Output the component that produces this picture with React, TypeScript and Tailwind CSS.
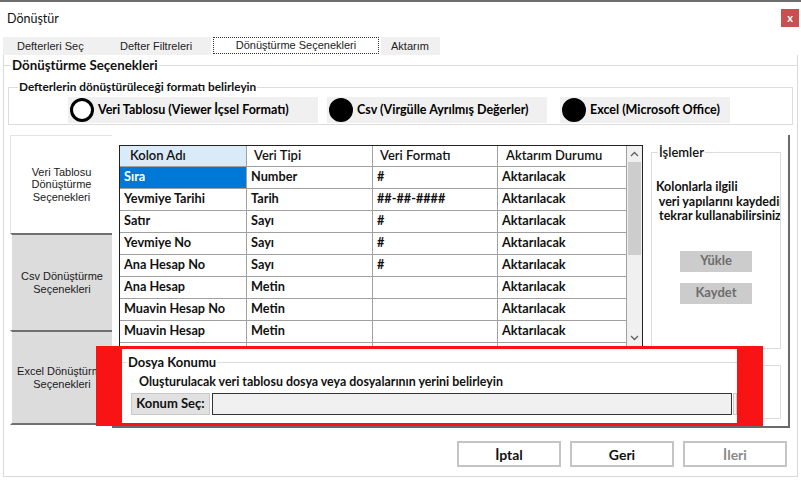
import React from "react";

const rows = [
  ["Sıra", "Number", "#", "Aktarılacak"],
  ["Yevmiye Tarihi", "Tarih", "##-##-####", "Aktarılacak"],
  ["Satır", "Sayı", "#", "Aktarılacak"],
  ["Yevmiye No", "Sayı", "#", "Aktarılacak"],
  ["Ana Hesap No", "Sayı", "#", "Aktarılacak"],
  ["Ana Hesap", "Metin", "", "Aktarılacak"],
  ["Muavin Hesap No", "Metin", "", "Aktarılacak"],
  ["Muavin Hesap", "Metin", "", "Aktarılacak"],
  ["Muavin Hesap Adı", "Metin", "", "Aktarılacak"],
];

const colW = ["w-[127px]", "w-[126px]", "w-[125px]", "w-[129px]"];

function Radio({ filled, label, className }: { filled: boolean; label: string; className: string }) {
  return (
    <div className={"flex items-center bg-[#f0f0f0] h-[26px] " + className}>
      <span
        className={
          "ml-[2px] w-[24px] h-[24px] shrink-0 rounded-full border-[3px] border-black " +
          (filled ? "bg-black" : "bg-white")
        }
      />
      <span className="ml-[4px] text-[12.5px] font-bold text-black whitespace-nowrap">{label}</span>
    </div>
  );
}

function Grid() {
  return (
    <div className="w-[524px] h-[202px] border border-[#222] flex overflow-hidden bg-white">
      <div className="flex flex-col">
        <div className="flex h-[21px] border-b border-[#a0a0a0] text-[13px] font-semibold text-[#111]">
          {["Kolon Adı", "Veri Tipi", "Veri Formatı", "Aktarım Durumu"].map((h, i) => (
            <div
              key={h}
              className={
                colW[i] +
                " h-full flex items-center border-r border-[#a0a0a0] " +
                (i === 0 ? "pl-[10px] bg-[#d9eaf9]" : i === 3 ? "pl-[8px]" : "pl-[7px]")
              }
            >
              {h}
            </div>
          ))}
        </div>
        {rows.map((r, ri) => (
          <div key={ri} className="flex h-[22px] shrink-0 border-b border-[#a0a0a0] text-[12.7px] font-bold text-[#111]">
            {r.map((c, ci) => (
              <div
                key={ci}
                className={
                  colW[ci] +
                  " h-full flex items-center pl-[4px] border-r border-[#a0a0a0] " +
                  (ri === 0 && ci === 0 ? "bg-[#0078d7] text-white" : "")
                }
              >
                {c}
              </div>
            ))}
          </div>
        ))}
      </div>
      <div className="w-[15px] bg-[#f0f0f0] flex flex-col items-center shrink-0">
        <div className="h-[16px] flex items-center justify-center">
          <svg width="9" height="6" viewBox="0 0 9 6">
            <path d="M1 5 L4.5 1.5 L8 5" fill="none" stroke="#606060" strokeWidth="1.3" />
          </svg>
        </div>
        <div className="w-[13px] h-[93px] bg-[#cdcdcd]" />
        <div className="flex-1" />
        <div className="h-[16px] flex items-center justify-center">
          <svg width="9" height="6" viewBox="0 0 9 6">
            <path d="M1 1 L4.5 4.5 L8 1" fill="none" stroke="#606060" strokeWidth="1.3" />
          </svg>
        </div>
      </div>
    </div>
  );
}

export default function App() {
  return (
    <div className="w-[801px] h-[481px] bg-white relative overflow-hidden font-['Lato',sans-serif] text-black">
      <div className="h-[2px] bg-[#6e6e6e]" />

      <div className="h-[34px] flex justify-between">
        <div className="pl-[7px] pt-[8px] text-[12.5px] text-[#111]">Dönüştür</div>
        <div className="mt-[7px] mr-[2px] w-[18px] h-[18px] bg-[#c75050] text-white text-[11px] font-bold flex items-center justify-center">
          x
        </div>
      </div>

      <div className="h-[19px] flex text-[11px] text-[#222] font-['Liberation_Sans',sans-serif]">
        <div className="w-[3px]" />
        <div className="flex items-center bg-[#f0f0f0] w-[99px] pl-[14px] mt-[1px]">Defterleri Seç</div>
        <div className="flex items-center bg-[#f0f0f0] w-[109px] pl-[18px] mt-[1px]">Defter Filtreleri</div>
        <div className="w-[170px] bg-white px-[2px] py-[1px]">
          <div className="h-full border border-dotted border-[#333] flex items-center justify-center">
            Dönüştürme Seçenekleri
          </div>
        </div>
        <div className="flex items-center bg-[#f0f0f0] w-[59px] pl-[10px] mt-[1px]">Aktarım</div>
      </div>

      <div className="mx-[3px] h-[422px] border border-t-0 border-[#dadada] flex flex-col">
        <fieldset className="border-0 border-t border-[#dcdcdc] mt-[1px]">
          <legend className="ml-[7px] px-[1px] text-[13.3px] font-bold text-[#111] leading-[18px]">
            Dönüştürme Seçenekleri
          </legend>

          <fieldset className="ml-[4px] mr-[4px] mt-[5px] border border-[#dcdcdc] pb-[1px]">
            <legend className="ml-[9px] px-[1px] text-[11.8px] font-bold text-[#111] leading-[16px]">
              Defterlerin dönüştürüleceği formatı belirleyin
            </legend>
            <div className="flex pt-[2px]">
              <Radio filled={false} label="Veri Tablosu (Viewer İçsel Formatı)" className="ml-[59px] w-[250px]" />
              <Radio filled label="Csv (Virgülle Ayrılmış Değerler)" className="ml-[9px] w-[220px]" />
              <Radio filled label="Excel (Microsoft Office)" className="ml-[13px] w-[170px]" />
            </div>
          </fieldset>

          <div className="ml-[6px] mt-[10px] w-[780px] h-[293px] flex">
            <div className="w-[102px] flex flex-col text-[11px] text-[#1a1a1a] font-['Liberation_Sans',sans-serif] leading-[12.5px] text-center">
              <div className="h-[98px] bg-white border-t border-l border-[#e3e3e3] flex items-center justify-center">
                Veri Tablosu
                <br />
                Dönüştürme
                <br />
                Seçenekleri
              </div>
              <div className="h-[97px] bg-[#dcdcdc] border-t-2 border-l-2 border-t-[#707070] border-l-white flex items-center justify-center">
                Csv Dönüştürme
                <br />
                Seçenekleri
              </div>
              <div className="h-[95px] bg-[#dcdcdc] border-t-2 border-l-2 border-b-2 border-t-[#707070] border-b-[#707070] border-l-white flex items-center justify-center whitespace-nowrap">
                Excel Dönüştürme
                <br />
                Seçenekleri
              </div>
            </div>

            <div className="flex-1 bg-white border-r-2 border-b-2 border-[#6a6a6a] flex pl-[7px] pt-[10px]">
              <Grid />
              <div className="ml-[8px] flex flex-col">
                <fieldset className="w-[130px] h-[204px] border border-[#dcdcdc]">
                  <legend className="ml-[6px] px-[1px] text-[13px] font-semibold text-[#111] leading-[15px]">
                    İşlemler
                  </legend>
                  <div className="mt-[20px] ml-[4px] w-[124px] overflow-hidden text-[12.5px] font-bold text-[#111] leading-[14.5px] whitespace-pre">
                    {"Kolonlarla ilgili\n veri yapılarını kaydedip\n tekrar kullanabilirsiniz"}
                  </div>
                  <div className="mt-[27px] ml-[28px] w-[72px] h-[21px] bg-[#cccccc] text-[#6d6d6d] text-[13px] font-bold flex items-center justify-center">
                    Yükle
                  </div>
                  <div className="mt-[11px] ml-[28px] w-[72px] h-[21px] bg-[#cccccc] text-[#6d6d6d] text-[13px] font-bold flex items-center justify-center">
                    Kaydet
                  </div>
                </fieldset>
                <fieldset className="mt-[16px] w-[130px] h-[54px] border border-[#dcdcdc]" />
              </div>
            </div>
          </div>
        </fieldset>

        <div className="mt-[13px] mr-[10px] flex justify-end gap-[9px]">
          {["İptal", "Geri", "İleri"].map((b, i) => (
            <div
              key={b}
              className={
                "w-[104px] h-[26px] border-2 border-[#c4c4c4] bg-white flex items-center justify-center text-[14px] font-bold " +
                (i === 2 ? "text-[#8a8a8a]" : "text-[#111]")
              }
            >
              {b}
            </div>
          ))}
        </div>
      </div>

      <div className="absolute left-[96px] top-[346px] w-[667px] h-[80px] border-l-[26px] border-r-[26px] border-y-[3px] border-[#f81414] bg-white">
        <fieldset className="border-0 border-t border-[#dcdcdc] mt-[5px]">
          <legend className="ml-[5px] px-[1px] text-[13px] font-bold text-[#111] leading-[16px]">
            Dosya Konumu
          </legend>
          <div className="mt-[5px] ml-[17px] h-[14px] leading-[14px] text-[12.4px] font-bold text-[#111] whitespace-nowrap">
            Oluşturulacak veri tablosu dosya veya dosyalarının yerini belirleyin
          </div>
          <div className="mt-[4px] flex h-[22px]">
            <div className="ml-[9px] w-[79px] h-full bg-[#e1e1e1] border border-[#c8c8c8] flex items-center justify-center text-[13px] font-bold text-[#111]">
              Konum Seç:
            </div>
            <div className="ml-[2px] w-[520px] h-full bg-[#f0f0f0] border border-[#333]" />
            <div className="ml-[1px] w-[4px] h-full bg-[#f3f3f3] border border-[#c8c8c8]" />
          </div>
        </fieldset>
      </div>
    </div>
  );
}
